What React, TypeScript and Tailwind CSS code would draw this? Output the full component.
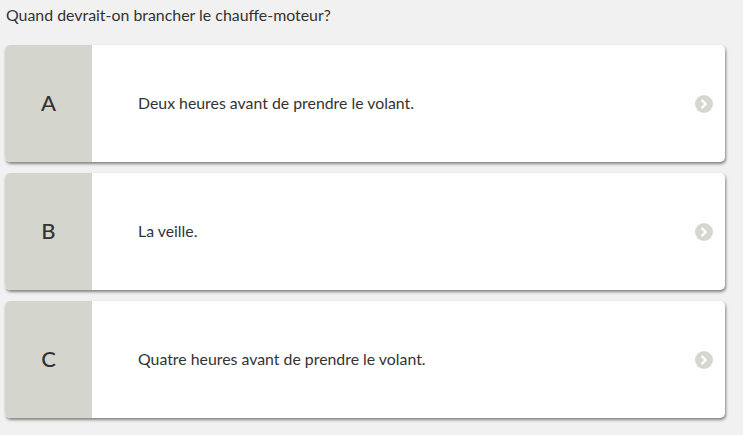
const OPTIONS = [
  { letter: 'A', text: 'Deux heures avant de prendre le volant.' },
  { letter: 'B', text: 'La veille.' },
  { letter: 'C', text: 'Quatre heures avant de prendre le volant.' },
]

function ChevronCircle() {
  return (
    <svg width="18" height="18" viewBox="0 0 18 18" className="shrink-0">
      <circle cx="9" cy="9" r="9" fill="#d5d7ce" />
      <path d="M7.3 5.6 L10.7 9 L7.3 12.4" fill="none" stroke="#ffffff" strokeWidth="2.4" strokeLinecap="round" strokeLinejoin="round" />
    </svg>
  )
}

export default function App() {
  return (
    <div className="h-[435px] w-[743px] bg-[#f1f1f1] font-['Lato','Liberation_Sans',sans-serif] text-[#333]">
      <div className="px-[6px] pt-[5px] text-[15.9px] leading-[20px]">Quand devrait-on brancher le chauffe-moteur?</div>
      <div className="mt-[20px] flex w-[725px] flex-col gap-[11px] pl-[5px]">
        {OPTIONS.map((o) => (
          <div
            key={o.letter}
            className="flex h-[117px] overflow-hidden rounded-[5px] bg-white shadow-[1px_2px_3px_rgba(0,0,0,0.45)]"
          >
            <div className="flex w-[87px] shrink-0 items-center justify-center bg-[#d4d6cd] pb-[2px] text-[22px] font-medium text-[#333]">
              {o.letter}
            </div>
            <div className="flex flex-1 items-center pl-[46px] pr-[12px]">
              <span className="flex-1 pb-[2px] text-[15.85px]">{o.text}</span>
              <ChevronCircle />
            </div>
          </div>
        ))}
      </div>
    </div>
  )
}
